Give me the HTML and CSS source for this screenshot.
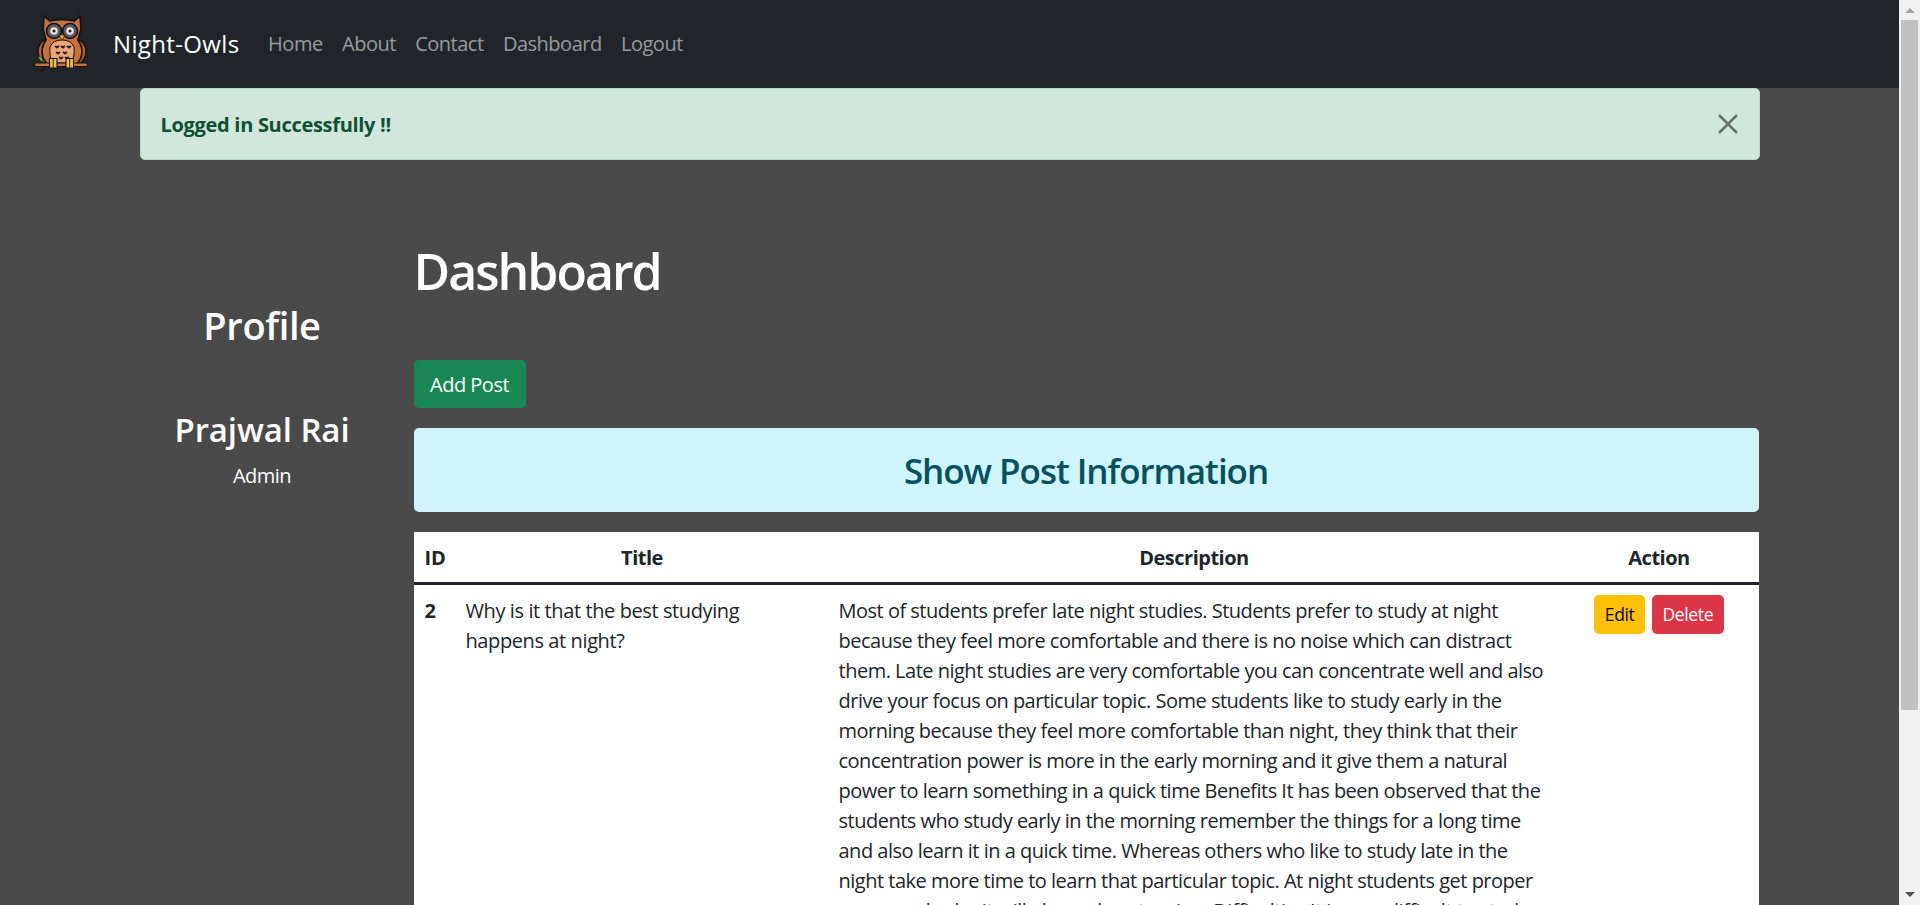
FILE: index.html
```html
<!DOCTYPE html>
<html lang="en">
<head>
    <meta charset="UTF-8">
    <title>Dashboard</title>
    <link rel="stylesheet" href="styles.css">
</head>
<body>
    <div class="page">
        <nav class="navbar">
            <a href="#" class="brand">
                <svg class="owl" viewBox="0 0 66 66" aria-hidden="true">
                    <path d="M8 40q0-8 8-12l8 2-6 22h-5q-5-5-5-12zM56 40q0-8-8-12l-8 2 6 22h5q5-5 5-12z" fill="#b9622f" stroke="#141414" stroke-width="1.600" stroke-linejoin="round"/>
                    <path d="M14 5l6 5q12-3 24 0l6-5 1 13-3 11q6 8 3 18l-4 6H17l-4-6q-3-10 3-18l-3-11z" fill="#c8703c" stroke="#141414" stroke-width="1.800" stroke-linejoin="round"/>
                    <path d="M32 29q-9 0-12 7-1 10 3 16h18q4-6 3-16-3-7-12-7z" fill="#eba67a" stroke="#141414" stroke-width="1"/>
                    <circle cx="24" cy="20" r="7.500" fill="#5d5760" stroke="#141414" stroke-width="1.600"/>
                    <circle cx="40" cy="20" r="7.500" fill="#5d5760" stroke="#141414" stroke-width="1.600"/>
                    <circle cx="24" cy="20" r="3.800" fill="#e9e5e5"/>
                    <circle cx="40" cy="20" r="3.800" fill="#e9e5e5"/>
                    <circle cx="24" cy="20" r="1.600" fill="#2a2a2a"/>
                    <circle cx="40" cy="20" r="1.600" fill="#2a2a2a"/>
                    <path d="M29 24h6l-3 5z" fill="#f3b93a" stroke="#141414" stroke-width=".7"/>
                    <path d="M25 35l2 1.500 2-1.500M31 35l2 1.500 2-1.500M37 35l2 1.500 2-1.500M26 41l2 1.500 2-1.500M33 41l2 1.500 2-1.500M29 46l2 1.500 2-1.500M35 46l2 1.500 2-1.500" fill="none" stroke="#2b2320" stroke-width="1.800"/>
                    <rect x="4.500" y="52" width="53" height="3.500" rx="1.700" fill="#c8703c" stroke="#141414" stroke-width="1.200"/>
                    <path d="M15 56l-4 5" stroke="#141414" stroke-width="1.400"/>
                    <path d="M13 51q-4-1-5-6 5 1 5 6z" fill="#7fc241" stroke="#141414" stroke-width=".6"/>
                    <path d="M19.500 47.500h7.500v9.500h-7.500zM36 47.500h7.500v9.500h-7.500z" fill="#eec24a" stroke="#141414" stroke-width="1.100"/>
                    <path d="M23.200 47.500v9.500M39.700 47.500v9.500" stroke="#141414" stroke-width=".9"/>
                </svg>
                <span>Night-Owls</span>
            </a>
            <ul class="nav-links">
                <li><a href="#">Home</a></li>
                <li><a href="#">About</a></li>
                <li><a href="#">Contact</a></li>
                <li><a href="#">Dashboard</a></li>
                <li><a href="#">Logout</a></li>
            </ul>
        </nav>

        <div class="container">
            <div class="alert">
                <strong>Logged in Successfully !!</strong>
                <svg class="alert-close" viewBox="0 0 20 20" aria-hidden="true">
                    <path d="M1 1l18 18M19 1L1 19" stroke="#000" stroke-width="2.600"/>
                </svg>
            </div>

            <div class="row">
                <aside class="sidebar">
                    <h2>Profile</h2>
                    <h3>Prajwal Rai</h3>
                    <p>Admin</p>
                </aside>
                <main class="content">
                    <h1>Dashboard</h1>
                    <a href="#" class="btn btn-add">Add Post</a>
                    <h3 class="info-title">Show Post Information</h3>
                    <table class="posts">
                        <thead>
                            <tr>
                                <th class="col-id">ID</th>
                                <th class="col-title">Title</th>
                                <th class="col-desc">Description</th>
                                <th class="col-action">Action</th>
                            </tr>
                        </thead>
                        <tbody>
                            <tr>
                                <th>2</th>
                                <td class="post-title">Why is it that the best studying happens at night?</td>
                                <td>Most of students prefer late night studies. Students prefer to study at night because they feel more comfortable and there is no noise which can distract them. Late night studies are very comfortable you can concentrate well and also drive your focus on particular topic. Some students like to study early in the morning because they feel more comfortable than night, they think that their concentration power is more in the early morning and it give them a natural power to learn something in a quick time Benefits It has been observed that the students who study early in the morning remember the things for a long time and also learn it in a quick time. Whereas others who like to study late in the night take more time to learn that particular topic. At night students get proper peace and calm it will also reduce tension. Difficulties It is very difficult to study</td>
                                <td class="post-actions">
                                    <div class="actions">
                                        <a href="#" class="btn btn-sm btn-edit">Edit</a>
                                        <a href="#" class="btn btn-sm btn-delete">Delete</a>
                                    </div>
                                </td>
                            </tr>
                        </tbody>
                    </table>
                </main>
            </div>
        </div>
    </div>
    <div class="scrollbar">
        <span class="arrow-up"></span>
        <span class="thumb"></span>
        <span class="arrow-down"></span>
    </div>
</body>
</html>
```

FILE: styles.css
```css
html, body {
    height: 100%;
    margin: 0;
    overflow: hidden;
}
body {
    display: flex;
    font-family: "Open Sans", "Noto Sans", sans-serif;
    font-size: 20px;
    line-height: 1.5;
    letter-spacing: -0.5px;
    color: #212529;
    background-color: #4a4a4a;
}
.page {
    flex: 1;
    min-width: 0;
    height: 100%;
    overflow: hidden;
}
a {
    text-decoration: none;
}
h1, h2, h3, p {
    margin: 0;
    font-weight: 600;
    line-height: 1.2;
}
.navbar {
    height: 88px;
    display: flex;
    align-items: center;
    padding: 0 30px;
    background-color: #212529;
}
.brand {
    display: flex;
    align-items: center;
    color: white;
    font-size: 24px;
    letter-spacing: 0.35px;
    margin-right: 19px;
}
.owl {
    width: 66px;
    height: 66px;
    margin-right: 17px;
}
.nav-links {
    display: flex;
    list-style: none;
    margin: 0;
    padding: 0;
}
.nav-links a {
    display: block;
    padding: 8px 9.700px;
    color: rgba(255,255,255,.55);
}
.container {
    width: 1620px;
    margin: 0 auto;
}
.alert {
    display: flex;
    justify-content: space-between;
    align-items: center;
    height: 72px;
    box-sizing: border-box;
    padding: 2px 21px 0 20px;
    background-color: #d1e7dd;
    border: 1px solid #badbcc;
    border-radius: 5px;
    color: #0f5132;
    letter-spacing: -0.3px;
}
.alert-close {
    width: 20px;
    height: 20px;
    margin-top: -2px;
    opacity: .5;
}
.row {
    display: flex;
    margin-top: 81px;
    gap: 29px;
}
.sidebar {
    width: 245px;
    padding-top: 62px;
    text-align: center;
    color: white;
}
.sidebar h2 {
    font-size: 38px;
    letter-spacing: -0.35px;
    margin-bottom: 61px;
}
.sidebar h3 {
    font-size: 33px;
    letter-spacing: -0.1px;
    margin-bottom: 12px;
}
.sidebar p {
    font-weight: 400;
    font-size: 20px;
    line-height: 1.5;
}
.content {
    flex: 1;
    min-width: 0;
    padding-right: 1px;
}
.content h1 {
    color: white;
    font-size: 50px;
    letter-spacing: -2px;
    margin-bottom: 59px;
}
.btn {
    display: inline-block;
    border-radius: 5px;
    color: white;
}
.btn-add {
    padding: 10px 16.500px 8px;
    background-color: #198754;
}
.info-title {
    margin: 20px 0;
    padding: 22px 21px 20px;
    text-align: center;
    font-weight: 600;
    font-size: 35px;
    letter-spacing: -1.05px;
    color: #055160;
    background-color: #cff4fc;
    border-radius: 5px;
}
.posts {
    width: 100%;
    border-collapse: collapse;
    table-layout: fixed;
    background-color: white;
}
.posts th, .posts td {
    padding: 11px 10px 9px;
    vertical-align: top;
}
.posts thead th {
    border-bottom: 3px solid #212529;
    text-align: center;
}
.posts thead .col-id {
    padding-left: 11px;
    text-align: left;
    letter-spacing: 0;
}
.posts tbody th {
    padding-left: 11px;
    text-align: left;
}
.col-id {
    width: 21px;
}
.col-title {
    width: 353px;
}
.col-desc {
    width: 711px;
}
.posts .post-title {
    padding-right: 50px;
    letter-spacing: -0.4px;
}
.posts .post-actions {
    padding-top: 10px;
}
.actions {
    display: flex;
    justify-content: center;
    gap: 7px;
}
.btn-sm {
    padding: 6px 10.500px;
    font-size: 17.500px;
    letter-spacing: -0.35px;
    line-height: 27px;
}
.btn-edit {
    background-color: #ffc107;
    color: black;
}
.btn-delete {
    background-color: #dc3545;
}
.scrollbar {
    width: 21px;
    flex: none;
    display: flex;
    flex-direction: column;
    align-items: center;
    background-color: #f1f1f1;
}
.thumb {
    width: 17px;
    height: 690px;
    background-color: #c1c1c1;
}
.arrow-up, .arrow-down {
    width: 0;
    height: 0;
    border-left: 5px solid transparent;
    border-right: 5px solid transparent;
}
.arrow-up {
    border-bottom: 5px solid #a3a3a3;
    margin: 8px 0 7px;
}
.arrow-down {
    border-top: 5px solid #505050;
    margin-top: auto;
    margin-bottom: 8px;
}
```
